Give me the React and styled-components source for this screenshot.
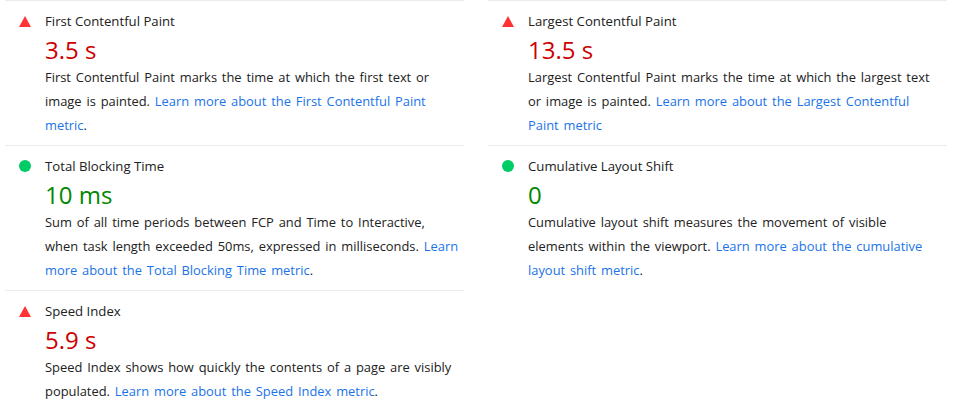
import React from "react";
import styled, { createGlobalStyle } from "styled-components";

const GlobalStyle = createGlobalStyle`
  html, body { margin: 0; padding: 0; background: #fff; }
  body {
    font-family: "Open Sans", "Noto Sans", sans-serif;
    color: #212121;
    -webkit-font-smoothing: antialiased;
  }
`;

const Grid = styled.div`
  display: grid;
  grid-template-columns: 459px 459px;
  column-gap: 24px;
  margin-left: 5px;
  width: 942px;
`;

const Metric = styled.div`
  border-top: 1px solid #ebebeb;
  display: grid;
  grid-template-columns: 40px 1fr;
  padding: 9px 4px 8px 0;
  align-content: start;
`;

const IconCell = styled.div`
  grid-column: 1;
  grid-row: 1;
  display: flex;
  align-items: center;
  padding-left: 14px;
`;

const Title = styled.div`
  grid-column: 2;
  grid-row: 1;
  font-size: 13.2px;
  line-height: 22px;
`;

const Value = styled.div`
  grid-column: 2;
  grid-row: 2;
  padding-top: 3px;
  font-size: 24px;
  line-height: 30px;
  color: ${(p) => (p.$status === "fail" ? "#cc0000" : "#008800")};
`;

const Desc = styled.div`
  grid-column: 2;
  grid-row: 3;
  font-size: 12.9px;
  word-spacing: 1.5px;
  line-height: 24px;
  color: #212121;
`;

const Link = styled.a`
  color: #1a73e8;
  text-decoration: none;
`;

const Fail = () => (
  <svg width="12" height="11" viewBox="0 0 12 11">
    <polygon points="6,0 12,11 0,11" fill="#ff3333" />
  </svg>
);

const Pass = () => (
  <svg width="12" height="12" viewBox="0 0 12 12">
    <circle cx="6" cy="6" r="6" fill="#00cc66" />
  </svg>
);

const metrics = [
  {
    title: "First Contentful Paint",
    value: "3.5 s",
    status: "fail",
    text: "First Contentful Paint marks the time at which the first text or image is painted. ",
    link: "Learn more about the First Contentful Paint metric",
    end: ".",
  },
  {
    title: "Largest Contentful Paint",
    value: "13.5 s",
    status: "fail",
    text: "Largest Contentful Paint marks the time at which the largest text or image is painted. ",
    link: "Learn more about the Largest Contentful Paint metric",
    end: "",
  },
  {
    title: "Total Blocking Time",
    value: "10 ms",
    status: "pass",
    text: "Sum of all time periods between FCP and Time to Interactive, when task length exceeded 50ms, expressed in milliseconds. ",
    link: "Learn more about the Total Blocking Time metric",
    end: ".",
  },
  {
    title: "Cumulative Layout Shift",
    value: "0",
    status: "pass",
    text: "Cumulative layout shift measures the movement of visible elements within the viewport. ",
    link: "Learn more about the cumulative layout shift metric",
    end: ".",
  },
  {
    title: "Speed Index",
    value: "5.9 s",
    status: "fail",
    text: "Speed Index shows how quickly the contents of a page are visibly populated. ",
    link: "Learn more about the Speed Index metric",
    end: ".",
  },
];

export default function App() {
  return (
    <>
      <GlobalStyle />
      <Grid>
        {metrics.map((m) => (
          <Metric key={m.title}>
            <IconCell>{m.status === "fail" ? <Fail /> : <Pass />}</IconCell>
            <Title>{m.title}</Title>
            <Value $status={m.status}>{m.value}</Value>
            <Desc>
              {m.text}
              <Link href="#">{m.link}</Link>
              {m.end}
            </Desc>
          </Metric>
        ))}
      </Grid>
    </>
  );
}
